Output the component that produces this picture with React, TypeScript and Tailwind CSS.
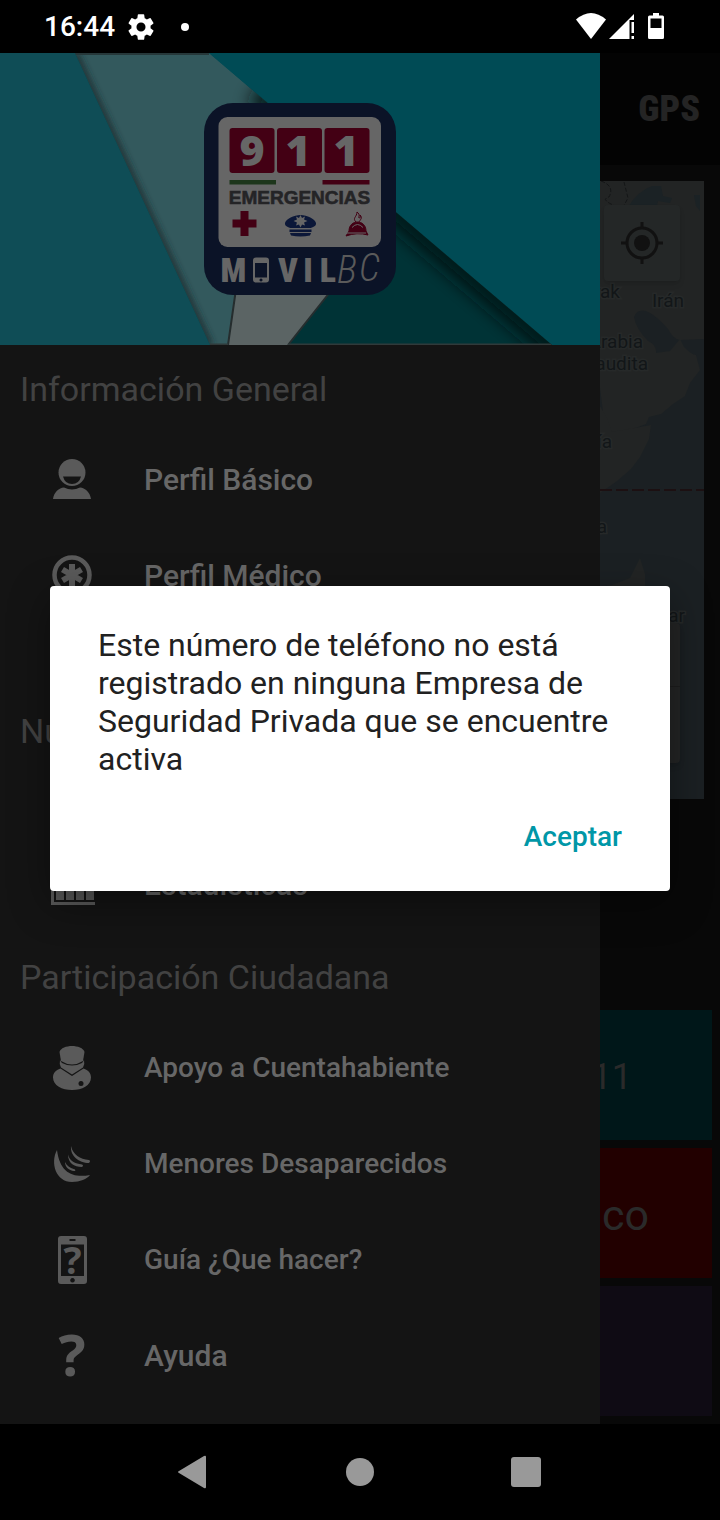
import type { ReactNode } from "react";

function StatusBar() {
  return (
    <header className="flex h-[53px] shrink-0 items-center justify-between bg-black pr-14 pl-11 text-white">
      <div className="flex items-center gap-[10px]">
        <span className="text-[28px] leading-8 font-medium">16:44</span>
        <svg className="size-8" viewBox="0 0 24 24" fill="currentColor" aria-hidden="true">
          <path d="M19.14 12.94c.04-.3.06-.61.06-.94 0-.32-.02-.64-.07-.94l2.03-1.58a.49.49 0 0 0 .12-.61l-1.92-3.32a.49.49 0 0 0-.59-.22l-2.39.96a7 7 0 0 0-1.62-.94l-.36-2.54a.48.48 0 0 0-.48-.41h-3.84c-.24 0-.43.17-.47.41l-.36 2.54c-.59.24-1.13.57-1.62.94l-2.39-.96a.48.48 0 0 0-.59.22L2.74 8.87c-.12.21-.08.47.12.61l2.03 1.58c-.05.3-.09.63-.09.94s.02.64.07.94l-2.03 1.58a.49.49 0 0 0-.12.61l1.92 3.32c.12.22.37.29.59.22l2.39-.96c.5.38 1.03.7 1.62.94l.36 2.54c.05.24.24.41.48.41h3.84c.24 0 .44-.17.47-.41l.36-2.54c.59-.24 1.13-.56 1.62-.94l2.39.96c.22.08.47 0 .59-.22l1.92-3.32a.49.49 0 0 0-.12-.61zM12 15.4a3.4 3.4 0 1 1 0-6.8 3.4 3.4 0 0 1 0 6.8z" />
        </svg>
        <span className="ml-[14px] size-2 rounded-full bg-white" />
      </div>
      <svg className="h-8 w-[88px]" viewBox="0 0 88 32" fill="currentColor" aria-hidden="true">
        <path d="M0 8.500Q15 -4.500 30 8.500L15 28z" />
        <path d="M58 3V9h-4.500v19H33z" />
        <path d="M55.500 11H58v11h-2.500zM55.500 25H58v3h-2.500z" />
        <path fillRule="evenodd" d="M77 2h6v2.500h3.500q1.500 0 1.500 1.500v20.500q0 1.500-1.500 1.500h-13q-1.500 0-1.500-1.500V6Q72 4.500 73.500 4.500H77zM74.500 7.500V17h11V7.500z" />
      </svg>
    </header>
  );
}

function Logo() {
  return (
    <svg className="relative size-48" viewBox="0 0 192 192" role="img" aria-label="911 Emergencias Móvil BC">
      <rect width="192" height="192" rx="29" fill="#0b1327" />
      <rect x="14.500" y="14" width="162.500" height="130" rx="9" fill="#666" />
      <g fill="#430014">
        <rect x="25.500" y="25" width="45" height="45" rx="3" />
        <rect x="73" y="25" width="45" height="45" rx="3" />
        <rect x="120.500" y="25" width="45" height="45" rx="3" />
      </g>
      <g className="font-['Open_Sans'] text-[43px] font-extrabold" fill="#666" textAnchor="middle">
        <text x="48" y="63">9</text>
        <text x="94" y="63">1</text>
        <text x="142" y="63">1</text>
      </g>
      <path d="M25.500 77H72v4.500H25.500z" fill="#1d361b" />
      <path d="M118.500 77h47v4.500h-47z" fill="#430014" />
      <text className="font-['Liberation_Sans'] text-[19px] font-bold" x="95.500" y="101" fill="#242426" stroke="#242426" strokeWidth="0.600" textAnchor="middle">EMERGENCIAS</text>
      <path d="M36.500 108h8v8.500h8v8h-8v8.500h-8v-8.500h-8v-8h8z" fill="#430014" />
      <g fill="#0b1738">
        <path d="M81 120c1-4 9-8 15.500-8s14.500 4 15.500 8c.5 3-3 4-5 5H86c-2-1-5.500-2-5-5z" />
        <path d="M85.500 126.500h22v2.500h-22zM86 130h21l-1 2.500q-9.500 2-19 0z" />
        <path d="m96.500 112 1.500 3 3-1.500-1 3 3.500 1.500-3.500 1.500 1 3-3-1-1.500 3-1.500-3-3 1 1-3-3.500-1.500 3.500-1.500-1-3 3 1.500z" fill="#666" />
      </g>
      <g fill="none" stroke="#430014" strokeWidth="1">
        <path d="M152 119c-4-4 1-5 1-10 4 3 1 5 2 6 1 0 2-1 1-3 3 3 0 5-1 7" />
        <path d="M145 128c0-12 17-12 17 0l2 4q-11-3-22 1z" fill="#430014" />
        <path d="M148 124.500q5.500-6 11 0" stroke="#666" />
        <path d="M143 130h19" stroke="#666" />
      </g>
      <g className="font-['Roboto_Condensed','Roboto',sans-serif] text-[34px] font-black" fill="#666" textAnchor="middle">
        <text x="29.500" y="179">M</text>
        <text x="84" y="179">V</text>
        <text x="104" y="179">I</text>
        <text x="124" y="179">L</text>
      </g>
      <path fillRule="evenodd" d="M52 154.500h10q3 0 3 3v19q0 3-3 3H52q-3 0-3-3v-19q0-3 3-3zM51 160v14.500h12V160zM57 175.500a1.500 1.500 0 1 0 .01 0z" fill="#666" />
      <g className="font-['Roboto_Condensed','Roboto'] text-[38px] font-light italic" fill="#5a5a5a">
        <text x="133" y="180">B</text>
        <text x="155" y="178">C</text>
      </g>
    </svg>
  );
}

function Hero() {
  return (
    <div className="relative flex h-[292px] shrink-0 items-center justify-center overflow-hidden bg-[#004b55]">
      <svg className="absolute inset-0 size-full" viewBox="0 0 600 292" preserveAspectRatio="none" aria-hidden="true">
        <defs>
          <filter id="soft" x="-20%" y="-20%" width="140%" height="140%">
            <feGaussianBlur stdDeviation="3" />
          </filter>
          <filter id="softer" x="-20%" y="-20%" width="140%" height="140%">
            <feGaussianBlur stdDeviation="9" />
          </filter>
          <clipPath id="sheet">
            <path d="M75 0h134l343 292H210z" />
          </clipPath>
        </defs>
        <path d="M0 0h75l135 292H0z" fill="#0f4d56" />
        <g clipPath="url(#sheet)">
          <path d="M75 0h134l343 292H210z" fill="#33595d" />
          <path d="M328 242 288 292h290L396 120z" fill="#003336" />
          <path d="M256 40 568 306" stroke="#061416" strokeWidth="24" filter="url(#softer)" />
          <path d="M75 0 210 292" stroke="#1c2f31" strokeWidth="6" filter="url(#soft)" />
          <path d="M236 236 228 292h60l46-58z" fill="#5b6464" />
          <path d="M236 236 228 292M334 234l-46 58" stroke="#252d2e" strokeWidth="2" />
          <path d="M75 0h134" stroke="#26383a" strokeWidth="4" />
          <path d="M210 292h18M288 292h264" stroke="#303a3a" strokeWidth="3" />
        </g>
      </svg>
      <Logo />
    </div>
  );
}

function Icon({ children }: { children: ReactNode }) {
  return (
    <svg className="size-12 shrink-0 overflow-visible" viewBox="0 0 48 48" fill="#5a5a5a" aria-hidden="true">
      {children}
    </svg>
  );
}

const personIcon = (
  <Icon>
    <circle cx="24" cy="16.500" r="13.500" />
    <path d="M15 20.500h18q-2 7.500-9 7.500t-9-7.500z" fill="#141414" />
    <path d="M5 43c1-7 6-11 11-11.500q8 4 16 0c5 .5 10 4.500 11 11.500z" />
  </Icon>
);

const medicalIcon = (
  <Icon>
    <circle cx="24" cy="23" r="17.500" fill="none" stroke="#5a5a5a" strokeWidth="4.500" />
    <path d="M24 12v22M14.500 17.500l19 11M14.500 28.500l19-11" stroke="#5a5a5a" strokeWidth="6" />
  </Icon>
);

const chartIcon = (
  <Icon>
    <path d="M3 6h3v35h41v3H3zM8 24h8v15H8zM18 16h8v23h-8zM28 20h8v19h-8zM38 10h8v29h-8z" />
  </Icon>
);

const officerIcon = (
  <Icon>
    <path d="M11.500 8c1-4 7-6 12.500-6s11.500 2 12.500 6L35 17q-11 7-22 0z" />
    <path d="M12 16q1 2 2 3 10 5 20 0 1-1 2-3 1 4-1 7.500L24 30.500 13 23.500q-2-3.500-1-7.500z" />
    <path d="M12.500 24.500 24 32l11.500-7.500c5 1.500 7.500 5 7.500 9 0 8-9 12.500-19 12.500S5 41.500 5 33.500c0-4 2.500-7.500 7.500-9z" />
    <circle cx="33" cy="39.500" r="2.500" fill="#141414" />
  </Icon>
);

const wingIcon = (
  <Icon>
    <path d="M9 10C2 23 8 42 24 42c8 0 15-3 18-7C26 38 12 34 9 10z" />
    <path d="M23 6c2 9 9 13 18 14q2 1 0 3C31 23 22 16 23 6zM20 14.500c2 7 7 9 14 10q2 1 0 2.500C26 27 20 23 20 14.500zM17 22c2 4 5 6 10 7.500q1 1.500-1 1.500C21 30.500 17 27 17 22z" />
  </Icon>
);

const phoneIcon = (
  <Icon>
    <path fillRule="evenodd" d="M13 0h23q3 0 3 3v42q0 3-3 3H13q-3 0-3-3V3q0-3 3-3zM13 8.500V40h23V8.500zM21.500 3v2h6V3zM24.500 42a2.300 2.300 0 1 0 .01 0z" />
    <text className="font-['Open_Sans'] text-[38px] font-bold" x="24.500" y="38" textAnchor="middle">?</text>
  </Icon>
);

const questionIcon = (
  <Icon>
    <text className="font-['Open_Sans'] text-[57px] font-bold" x="24" y="44" textAnchor="middle">?</text>
  </Icon>
);

function Section({ title, children }: { title: string; children: ReactNode }) {
  return (
    <section>
      <h2 className="flex h-[87px] items-center px-5 text-[34px] leading-10 text-[#424242]">{title}</h2>
      {children}
    </section>
  );
}

function Item({ icon, label, large = false }: { icon: ReactNode; label: string; large?: boolean }) {
  return (
    <a
      href="#"
      className={`flex h-24 items-center gap-12 px-12 leading-9 font-medium text-[#676767] ${large ? "text-[30px]" : "text-[28px]"}`}
    >
      {icon}
      {label}
    </a>
  );
}

function Drawer() {
  return (
    <nav className="w-5/6 shrink-0 bg-[#141414]">
      <Hero />
      <div className="flex flex-col gap-[63px]">
        <Section title="Información General">
          <Item icon={personIcon} label="Perfil Básico" large />
          <Item icon={medicalIcon} label="Perfil Médico" large />
        </Section>
        <div>
          <Section title="Números">
            <div className="pt-[63px]">
              <Item icon={chartIcon} label="Estadísticas" large />
            </div>
          </Section>
          <Section title="Participación Ciudadana">
            <Item icon={officerIcon} label="Apoyo a Cuentahabiente" />
            <Item icon={wingIcon} label="Menores Desaparecidos" />
            <Item icon={phoneIcon} label="Guía ¿Que hacer?" />
            <Item icon={questionIcon} label="Ayuda" large />
          </Section>
        </div>
      </div>
    </nav>
  );
}

function MapPanel() {
  return (
    <div className="relative mt-4 mr-4 h-[618px] shrink-0 overflow-hidden bg-[#1b2023]">
      <svg className="h-full w-[104px]" viewBox="0 0 104 618" role="img" aria-label="Mapa">
        <path d="M0 0h104v158l-24 1q-6 0-12-11-12-14-22-18-9-2-12 6 2 12 14 24 9 4 8 12l14-2 10-12 4 8q8 8 12 8l4 15-10 13-5 13-12 8-12 10-12 3-3 7-32 12-8 5-6 2H7L0 207z" fill="#222424" />
        <path d="M28 26q10-16 24-21h9l2 10 9 2-2 5-12-2-2 10 12 22v30H50L44 52zM94 14h6v16l-4-5z" fill="#1b2225" />
        <path d="M0 225l7 12 5 14 39-7-2 14-9 18-9 12-14 12L0 312zM12 404l18-7 10-20 5 16v25l-8 60H0v-72z" fill="#222424" />
        <path d="M1 0q14 5 8 16-8 2 2 7t6 12M24 1l4 16-6 11" fill="none" stroke="#141617" strokeWidth="1" strokeDasharray="4 2" />
        <path d="M0 309h104" stroke="#1c1012" strokeWidth="2" strokeDasharray="12 4" />
        <g className="font-['Roboto'] text-[19px]" fill="#121618" stroke="#262929" strokeWidth="3" paintOrder="stroke" textAnchor="end">
          <text x="20" y="117">Irak</text>
          <text x="84" y="126">Irán</text>
          <text x="43" y="167">Arabia</text>
          <text x="48" y="189">Saudita</text>
          <text x="12" y="267">Etiopía</text>
          <text x="7" y="352">Kenia</text>
          <text x="85" y="441">Madagascar</text>
        </g>
      </svg>
      <button type="button" aria-label="Mi ubicación" className="absolute top-6 right-6 flex size-[76px] items-center justify-center rounded-sm bg-[#242727] shadow-md">
        <svg className="size-[42px]" viewBox="0 0 42 42" fill="none" stroke="#111" strokeWidth="3" aria-hidden="true">
          <circle cx="21" cy="21" r="15" />
          <circle cx="21" cy="21" r="8" fill="#111" stroke="none" />
          <path d="M21 0v6M21 36v6M0 21h6M36 21h6" />
        </svg>
      </button>
      <div className="absolute right-6 bottom-9 flex w-[76px] flex-col divide-y divide-[#1d1d1d] rounded-sm bg-[#242525] shadow-md">
        <button type="button" aria-label="Acercar" className="h-[64px]" />
        <button type="button" aria-label="Alejar" className="h-[76px]" />
      </div>
    </div>
  );
}

function HomePage() {
  return (
    <div className="flex min-w-0 flex-1 flex-col overflow-hidden bg-[#080808]">
      <div className="flex h-28 shrink-0 items-center justify-end bg-[#030303] pr-5">
        <span className="font-['Roboto_Condensed','Roboto',sans-serif] text-[36px] leading-10 font-black text-[#242424]">GPS</span>
      </div>
      <MapPanel />
      <div className="mt-auto mr-2 mb-2 flex flex-col gap-2 text-[#2a2a2a]">
        <button type="button" className="flex h-[130px] items-center justify-end bg-[#001719] pt-1 pr-20 text-[36px]">911</button>
        <button type="button" aria-label="Médico" className="flex h-[130px] items-center bg-[#220000] pt-1 pl-[2px] text-[43px]">co</button>
        <button type="button" aria-label="Más opciones" className="h-[130px] bg-[#0f0b14]" />
      </div>
    </div>
  );
}

function Dialog() {
  return (
    <div className="absolute inset-0 flex items-center justify-center px-[50px]">
      <div role="alertdialog" aria-describedby="message" className="w-full rounded bg-white px-12 pt-10 pb-[18px] shadow-[0_12px_40px_rgba(0,0,0,0.4)]">
        <p id="message" className="text-[32px] leading-[38px] text-[#212121]">
          Este número de teléfono no está registrado en ninguna Empresa de Seguridad Privada que se encuentre activa
        </p>
        <div className="mt-[23px] flex justify-end">
          <button type="button" className="h-[72px] text-[28px] font-medium text-[#0097a7]">Aceptar</button>
        </div>
      </div>
    </div>
  );
}

function NavigationBar() {
  return (
    <footer className="flex h-24 shrink-0 items-center justify-center gap-[118px] bg-black">
      <button type="button" aria-label="Atrás">
        <svg className="size-12" viewBox="0 0 48 48" fill="#999" aria-hidden="true">
          <path d="M34 8q2-1 2 1v30q0 2-2 1L9 25q-2-1 0-2z" />
        </svg>
      </button>
      <button type="button" aria-label="Inicio" className="flex size-12 items-center justify-center">
        <span className="size-7 rounded-full bg-[#999]" />
      </button>
      <button type="button" aria-label="Recientes" className="flex size-12 items-center justify-center">
        <span className="size-[30px] rounded-[3px] bg-[#999]" />
      </button>
    </footer>
  );
}

export default function App() {
  return (
    <div className="flex min-h-screen flex-col bg-black font-['Roboto',sans-serif]">
      <StatusBar />
      <main className="relative flex flex-1 overflow-hidden">
        <Drawer />
        <HomePage />
        <Dialog />
      </main>
      <NavigationBar />
    </div>
  );
}
